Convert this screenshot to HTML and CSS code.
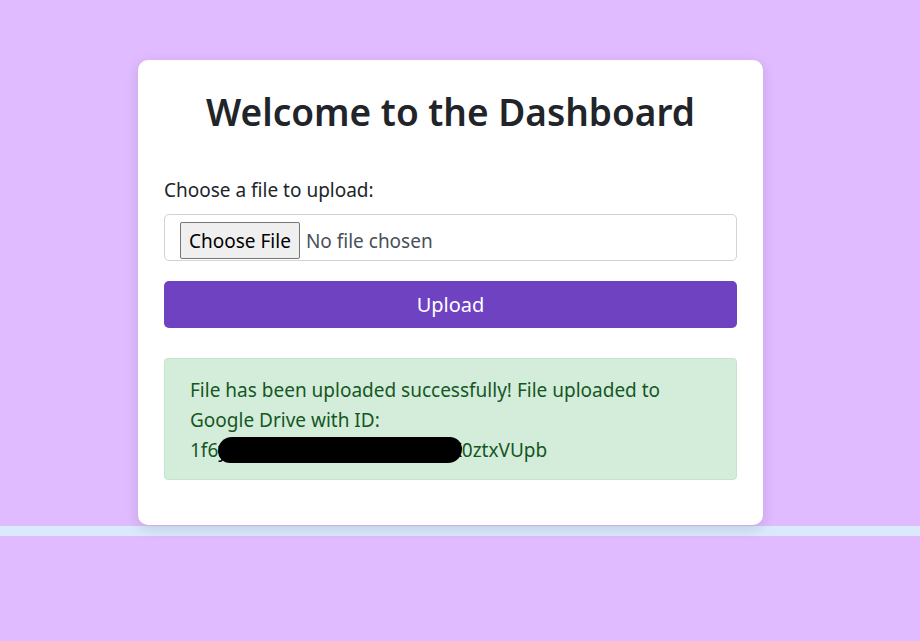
FILE: index.html
```html
<!DOCTYPE html>
<html lang="en">
<head>
<meta charset="utf-8">
<title>Dashboard</title>
<link rel="stylesheet" href="styles.css">
</head>
<body>
<div class="stage">
  <main class="card">
    <h1 class="title">Welcome to the Dashboard</h1>
    <form class="upload-form">
      <label class="label" for="file">Choose a file to upload:</label>
      <input class="file-input" type="file" id="file" name="file">
      <button class="btn-upload" type="button">Upload</button>
    </form>
    <div class="alert">File has been uploaded successfully! File uploaded to Google Drive with ID: <span class="file-id">1f6<span class="redacted">yXXXXXXXXXXXXXXXXXXXXX</span>0ztxVUpb</span></div>
  </main>
</div>
<div class="strip"></div>
</body>
</html>
```
FILE: styles.css
```css
html, body {
  margin: 0;
  padding: 0;
}
body {
  background: #e0bbff;
  font-family: "Noto Sans", "Open Sans", sans-serif;
  color: #212529;
  min-height: 641px;
}
.stage {
  display: flex;
  justify-content: center;
  padding: 60px 19px 1px 0;
}
.card {
  box-sizing: border-box;
  width: 625px;
  background: #fff;
  border-radius: 10px;
  padding: 29px 26px 45px;
  box-shadow: 0 4px 14px rgba(0, 0, 0, 0.12);
}
.title {
  margin: 0 0 41px;
  text-align: center;
  font-size: 37px;
  font-weight: 600;
  line-height: 46px;
  color: #212529;
}
.upload-form {
  display: flex;
  flex-direction: column;
}
.label {
  font-size: 19px;
  line-height: 28px;
  margin-bottom: 10px;
}
.file-input {
  box-sizing: border-box;
  height: 47px;
  padding: 7px 15px 0;
  border: 1px solid #ced4da;
  border-radius: 5px;
  font-family: inherit;
  font-size: 19px;
  color: #495057;
  background: #fff;
}
.file-input::file-selector-button {
  height: 37px;
  margin-right: 6px;
  padding: 0 8px;
  font-family: inherit;
  font-size: 19px;
  color: #000;
  background: #efefef;
  border: 1px solid #767676;
  border-radius: 2px;
}
.btn-upload {
  margin-top: 20px;
  height: 47px;
  border: none;
  border-radius: 5px;
  background: #6f42c1;
  color: #fff;
  font-family: inherit;
  font-size: 20px;
}
.alert {
  margin-top: 30px;
  padding: 16px 25px 14px;
  background: #d4edda;
  border: 1px solid #c3e6cb;
  border-radius: 4px;
  color: #155724;
  font-size: 19px;
  line-height: 30px;
}
.redacted {
  background: #000;
  color: #000;
  border-radius: 14px 12px 14px 12px;
}
.strip {
  height: 10px;
  background: #dbe9fc;
}
```
